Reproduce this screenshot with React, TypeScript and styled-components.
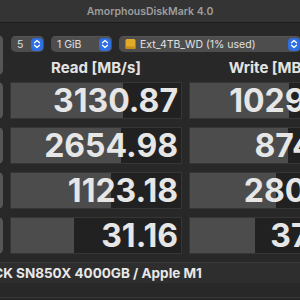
import styled, { createGlobalStyle } from "styled-components";

const GlobalStyle = createGlobalStyle`
  html, body {
    margin: 0;
    padding: 0;
    background: #282828;
    overflow: hidden;
  }
  body {
    width: 300px;
    height: 300px;
    font-family: Inter, "Liberation Sans", sans-serif;
  }
`;

interface IResult {
  test: string;
  read: string;
  write: string;
  readFill: number;
  writeFill: number;
}

const results: IResult[] = [
  { test: "SEQ1M QD8", read: "3130.87", write: "1029.42", readFill: 112, writeFill: 99 },
  { test: "SEQ1M QD1", read: "2654.98", write: "874.61", readFill: 110, writeFill: 98 },
  { test: "RND4K QD64", read: "1123.18", write: "280.53", readFill: 100, writeFill: 86 },
  { test: "RND4K QD1", read: "31.16", write: "37.89", readFill: 63, writeFill: 65 },
];

const CELL_INNER = 170;

const Stepper = () => (
  <StepperButton>
    <svg width="8" height="10" viewBox="0 0 8 10">
      <path
        d="M1.5 3.8 L4 1.5 L6.5 3.8 M1.5 6.2 L4 8.5 L6.5 6.2"
        fill="none"
        stroke="#fff"
        strokeWidth="1.3"
        strokeLinecap="round"
        strokeLinejoin="round"
      />
    </svg>
  </StepperButton>
);

const DriveIcon = () => (
  <svg width="11" height="10" viewBox="0 0 11 10">
    <rect x="0.5" y="0" width="10" height="10" rx="1.5" fill="#e5a928" />
    <rect x="0.5" y="7.5" width="10" height="2.5" rx="1" fill="#c78d18" />
  </svg>
);

export default function App() {
  return (
    <Window>
      <GlobalStyle />
      <TitleBar>AmorphousDiskMark 4.0</TitleBar>
      <Board>
        <AllButton>All</AllButton>
        <Toolbar>
          <Popup $width={33}>
            <PopupLabel>5</PopupLabel>
            <Stepper />
          </Popup>
          <Popup $width={61}>
            <PopupLabel>1 GiB</PopupLabel>
            <Stepper />
          </Popup>
          <Popup $width={182}>
            <DriveIcon />
            <PopupLabel>Ext_4TB_WD (1% used)</PopupLabel>
            <Stepper />
          </Popup>
        </Toolbar>
        <ColumnTitle>Read [MB/s]</ColumnTitle>
        <ColumnTitle>Write [MB/s]</ColumnTitle>
        {results.map((r) => (
          <Row key={r.test}>
            <TestButton>{r.test}</TestButton>
            <ResultCell>
              <Fill style={{ width: `${(r.readFill / CELL_INNER) * 100}%` }} />
              <Value>{r.read}</Value>
            </ResultCell>
            <ResultCell>
              <Fill style={{ width: `${(r.writeFill / CELL_INNER) * 100}%` }} />
              <Value>{r.write}</Value>
            </ResultCell>
          </Row>
        ))}
        <Footer>WD_BLACK SN850X 4000GB / Apple M1</Footer>
      </Board>
      <StatusStrip />
    </Window>
  );
}

const Window = styled.div`
  width: 300px;
  height: 300px;
  display: flex;
  flex-direction: column;
  overflow: hidden;
  background: #282828;
`;

const TitleBar = styled.div`
  height: 22px;
  flex-shrink: 0;
  display: flex;
  align-items: center;
  justify-content: center;
  background: #343434;
  border-bottom: 1px solid #1c1c1c;
  color: #9d9d9d;
  font-size: 10.5px;
  font-weight: 600;
`;

const Board = styled.div`
  display: grid;
  grid-template-columns: 80px 172px 172px;
  grid-template-rows: 16px 14px repeat(4, 37px) 21px;
  column-gap: 7px;
  row-gap: 8px;
  margin: 13px 0 0 -77px;
  width: 445px;
`;

const AllButton = styled.div`
  grid-row: 1 / 3;
  grid-column: 1;
  margin-top: -1px;
  margin-bottom: -1px;
  border-radius: 5px;
  background: #565656;
  color: #e0e0e0;
  font-size: 13px;
  display: flex;
  align-items: center;
  justify-content: center;
`;

const Toolbar = styled.div`
  grid-row: 1;
  grid-column: 2 / 4;
  display: flex;
  gap: 7px;
  padding-left: 1px;
`;

const Popup = styled.div<{ $width: number }>`
  width: ${(p) => p.$width}px;
  height: 16px;
  flex-shrink: 0;
  box-sizing: border-box;
  display: flex;
  align-items: center;
  gap: 4px;
  padding: 0 1px 0 6px;
  border-radius: 5px;
  background: #4d4d4d;
  box-shadow: inset 0 0.5px 0 #5e5e5e;
`;

const PopupLabel = styled.span`
  flex: 1;
  color: #e0e0e0;
  font-size: 10.5px;
  white-space: nowrap;
  overflow: hidden;
`;

const StepperButton = styled.span`
  width: 12px;
  height: 13px;
  flex-shrink: 0;
  display: flex;
  align-items: center;
  justify-content: center;
  border-radius: 4px;
  background: #2f6fe1;
`;

const ColumnTitle = styled.div`
  grid-row: 2;
  display: flex;
  align-items: center;
  justify-content: center;
  color: #e4e4e4;
  font-size: 15px;
  font-weight: 700;
  &:nth-of-type(3) {
    grid-column: 2;
  }
`;

const Row = styled.div`
  display: contents;
`;

const TestButton = styled.div`
  border-radius: 5px;
  background: #565656;
  color: #e0e0e0;
  font-size: 11px;
  display: flex;
  align-items: center;
  justify-content: center;
  text-align: center;
`;

const ResultCell = styled.div`
  position: relative;
  display: flex;
  align-items: center;
  justify-content: flex-end;
  padding: 0 3px;
  border: 1px solid #363636;
  background: #212121;
  overflow: hidden;
`;

const Fill = styled.div`
  position: absolute;
  left: 0;
  top: 0;
  bottom: 0;
  background: #4c4c4c;
`;

const Value = styled.span`
  position: relative;
  color: #e6e6e6;
  font-size: 32px;
  font-weight: 700;
  line-height: 1;
`;

const Footer = styled.div`
  grid-column: 1 / 4;
  display: flex;
  align-items: center;
  padding-left: 14px;
  background: #2e2e2e;
  border-top: 1px solid #383838;
  color: #e8e8e8;
  font-size: 13.5px;
  font-weight: 700;
  white-space: nowrap;
`;

const StatusStrip = styled.div`
  margin-top: 14px;
  flex: 1;
  border-top: 1px solid #3a3a3a;
  background: #262626;
`;
